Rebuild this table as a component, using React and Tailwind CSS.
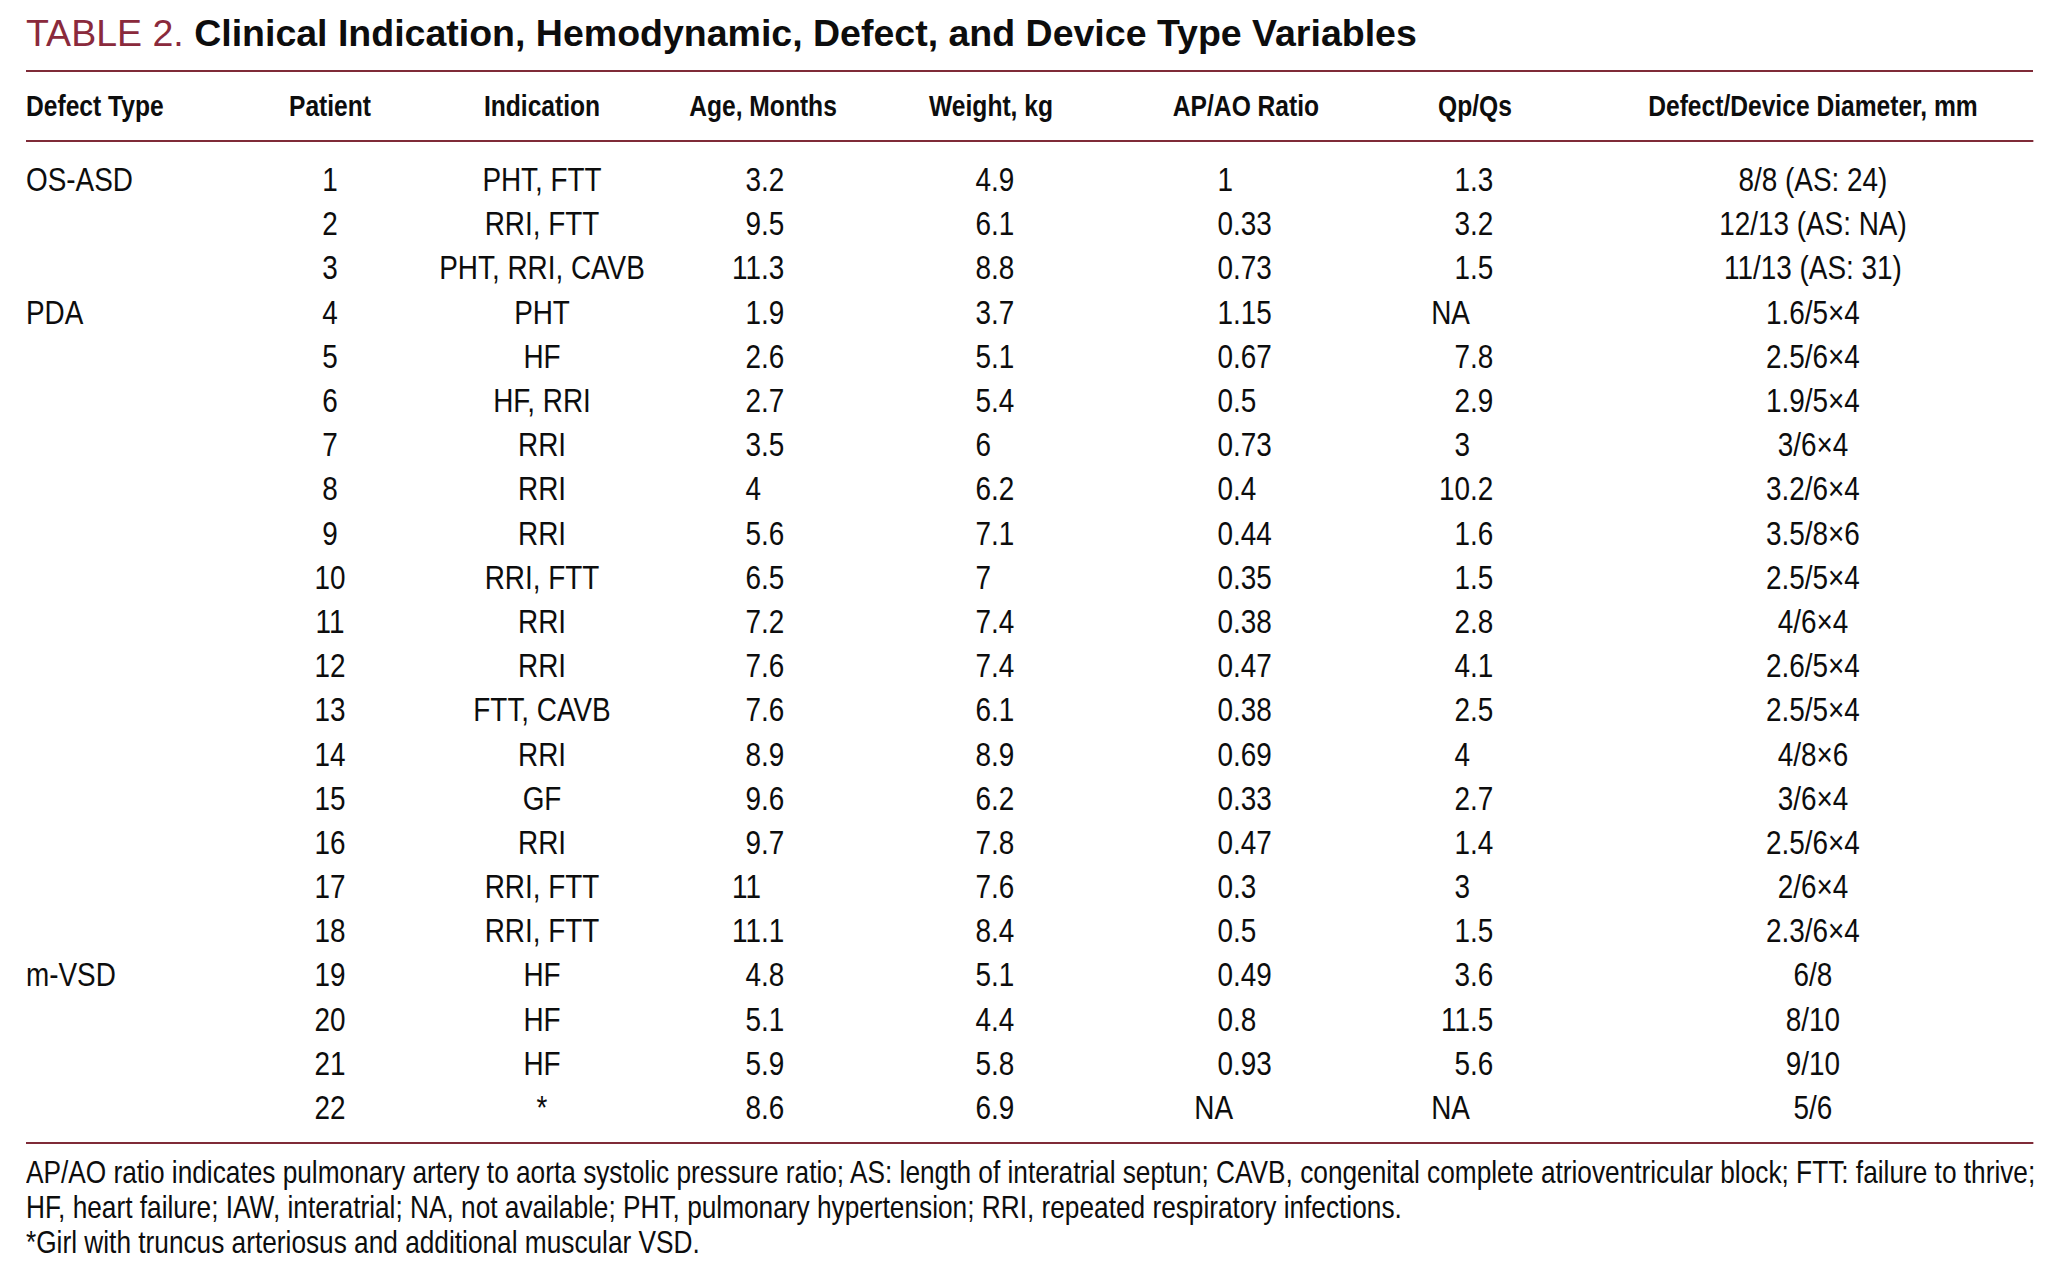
import React from "react";

const rows = [
  ["OS-ASD", "1", "PHT, FTT", "3.2", "4.9", "1", "1.3", "8/8 (AS: 24)"],
  ["", "2", "RRI, FTT", "9.5", "6.1", "0.33", "3.2", "12/13 (AS: NA)"],
  ["", "3", "PHT, RRI, CAVB", "11.3", "8.8", "0.73", "1.5", "11/13 (AS: 31)"],
  ["PDA", "4", "PHT", "1.9", "3.7", "1.15", "NA", "1.6/5×4"],
  ["", "5", "HF", "2.6", "5.1", "0.67", "7.8", "2.5/6×4"],
  ["", "6", "HF, RRI", "2.7", "5.4", "0.5", "2.9", "1.9/5×4"],
  ["", "7", "RRI", "3.5", "6", "0.73", "3", "3/6×4"],
  ["", "8", "RRI", "4", "6.2", "0.4", "10.2", "3.2/6×4"],
  ["", "9", "RRI", "5.6", "7.1", "0.44", "1.6", "3.5/8×6"],
  ["", "10", "RRI, FTT", "6.5", "7", "0.35", "1.5", "2.5/5×4"],
  ["", "11", "RRI", "7.2", "7.4", "0.38", "2.8", "4/6×4"],
  ["", "12", "RRI", "7.6", "7.4", "0.47", "4.1", "2.6/5×4"],
  ["", "13", "FTT, CAVB", "7.6", "6.1", "0.38", "2.5", "2.5/5×4"],
  ["", "14", "RRI", "8.9", "8.9", "0.69", "4", "4/8×6"],
  ["", "15", "GF", "9.6", "6.2", "0.33", "2.7", "3/6×4"],
  ["", "16", "RRI", "9.7", "7.8", "0.47", "1.4", "2.5/6×4"],
  ["", "17", "RRI, FTT", "11", "7.6", "0.3", "3", "2/6×4"],
  ["", "18", "RRI, FTT", "11.1", "8.4", "0.5", "1.5", "2.3/6×4"],
  ["m-VSD", "19", "HF", "4.8", "5.1", "0.49", "3.6", "6/8"],
  ["", "20", "HF", "5.1", "4.4", "0.8", "11.5", "8/10"],
  ["", "21", "HF", "5.9", "5.8", "0.93", "5.6", "9/10"],
  ["", "22", "*", "8.6", "6.9", "NA", "NA", "5/6"],
];

// the table is set in a condensed face: lay it out wide, then squeeze it (x 0.82)
const grid =
  "grid grid-cols-[248.8px_243.9px_273.2px_265.9px_290.2px_331.7px_226.8px_567.1px]";

// decimal aligned number: integer part ends at a fixed x inside the cell
const Num = ({ v, w }) => {
  const [a, b] = v.split(".");
  return (
    <div className="flex">
      <span className={`${w} text-right`}>{a}</span>
      {b !== undefined && <span>.{b}</span>}
    </div>
  );
};

const App = () => {
  return (
    <div className="min-h-screen overflow-hidden bg-white pl-[26px] pr-[21px] pt-[11px] text-[#0d0d0d] font-['Liberation_Sans',Arial,sans-serif]">
      {/* title */}
      <h1 className="text-[37.5px] leading-[44px] whitespace-nowrap">
        <span className="text-[#8a2a3c]">TABLE 2. </span>
        <span className="font-bold">Clinical Indication, Hemodynamic, Defect, and Device Type Variables</span>
      </h1>

      <div className="mt-[15px] h-[2px] bg-[#7f2b38]" />

      <div className="w-[2447.6px] origin-left scale-x-[0.82]">
        {/* header */}
        <div className={`${grid} h-[68px] items-center text-[30px] font-bold leading-none`}>
          <div>Defect Type</div>
          <div className="text-center">Patient</div>
          <div className="text-center">Indication</div>
          <div className="text-center">Age, Months</div>
          <div className="text-center">Weight, kg</div>
          <div className="text-center">AP/AO Ratio</div>
          <div className="text-center">Qp/Qs</div>
          <div className="pl-[30.5px] text-center">Defect/Device Diameter, mm</div>
        </div>
        <div className="h-[2px] bg-[#7f2b38]" />

        {/* body */}
        <div className="pt-[15px] text-[34px] leading-none">
          {rows.map((r) => (
            <div key={r[1]} className={`${grid} h-[44.2px] items-center`}>
              <div>{r[0]}</div>
              <div className="text-center">{r[1]}</div>
              <div className="text-center whitespace-nowrap">{r[2]}</div>
              <Num v={r[3]} w="w-[130.5px]" />
              <Num v={r[4]} w="w-[145.1px]" />
              <Num v={r[5]} w="w-[150px]" />
              <Num v={r[6]} w="w-[107.3px]" />
              <div className="pl-[30.5px] text-center whitespace-nowrap">{r[7]}</div>
            </div>
          ))}
        </div>

        <div className="mt-[13px] h-[2px] bg-[#7f2b38]" />

        {/* footnotes */}
        <div className="pt-[11px] text-[32px] leading-[35px] whitespace-nowrap">
          <p>
            AP/AO ratio indicates pulmonary artery to aorta systolic pressure ratio; AS: length of interatrial septun; CAVB, congenital complete atrioventricular block; FTT: failure to thrive;
          </p>
          <p>HF, heart failure; IAW, interatrial; NA, not available; PHT, pulmonary hypertension; RRI, repeated respiratory infections.</p>
          <p>*Girl with truncus arteriosus and additional muscular VSD.</p>
        </div>
      </div>
    </div>
  );
};

export default App;
